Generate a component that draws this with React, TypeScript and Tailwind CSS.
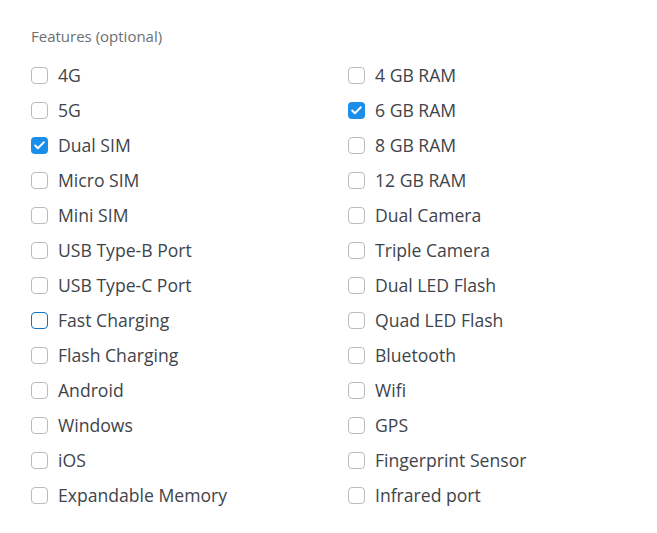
import { Check } from 'lucide-react';

const left = [
  '4G', '5G', 'Dual SIM', 'Micro SIM', 'Mini SIM', 'USB Type-B Port', 'USB Type-C Port',
  'Fast Charging', 'Flash Charging', 'Android', 'Windows', 'iOS', 'Expandable Memory',
];
const right = [
  '4 GB RAM', '6 GB RAM', '8 GB RAM', '12 GB RAM', 'Dual Camera', 'Triple Camera',
  'Dual LED Flash', 'Quad LED Flash', 'Bluetooth', 'Wifi', 'GPS', 'Fingerprint Sensor', 'Infrared port',
];
const checked = ['Dual SIM', '6 GB RAM'];
const focused = 'Fast Charging';

function Item({ label }: { label: string }) {
  const on = checked.includes(label);
  return (
    <div className="flex items-center h-[35px]">
      {on ? (
        <span className="w-[17px] h-[17px] rounded-[4px] bg-[#1a8ee8] flex items-center justify-center">
          <Check size={13} strokeWidth={3.5} className="text-white" />
        </span>
      ) : (
        <span
          className={
            label === focused
              ? 'w-[17px] h-[17px] rounded-[4px] border border-[#1670c4] bg-white'
              : 'w-[17px] h-[17px] rounded-[4px] border border-[#b9bcb9] bg-white'
          }
        />
      )}
      <span className="ml-[10px] text-[17.6px] text-[#40444a]">{label}</span>
    </div>
  );
}

export default function App() {
  return (
    <div className="min-h-[533px] bg-white pl-[31px] pt-[25px]" style={{ fontFamily: '"Open Sans", sans-serif' }}>
      <p className="text-[15px] text-[#6b6f73] mb-[10px]">Features (optional)</p>
      <div className="flex">
        <div className="w-[317px]">
          {left.map((l) => (
            <Item key={l} label={l} />
          ))}
        </div>
        <div>
          {right.map((l) => (
            <Item key={l} label={l} />
          ))}
        </div>
      </div>
    </div>
  );
}
